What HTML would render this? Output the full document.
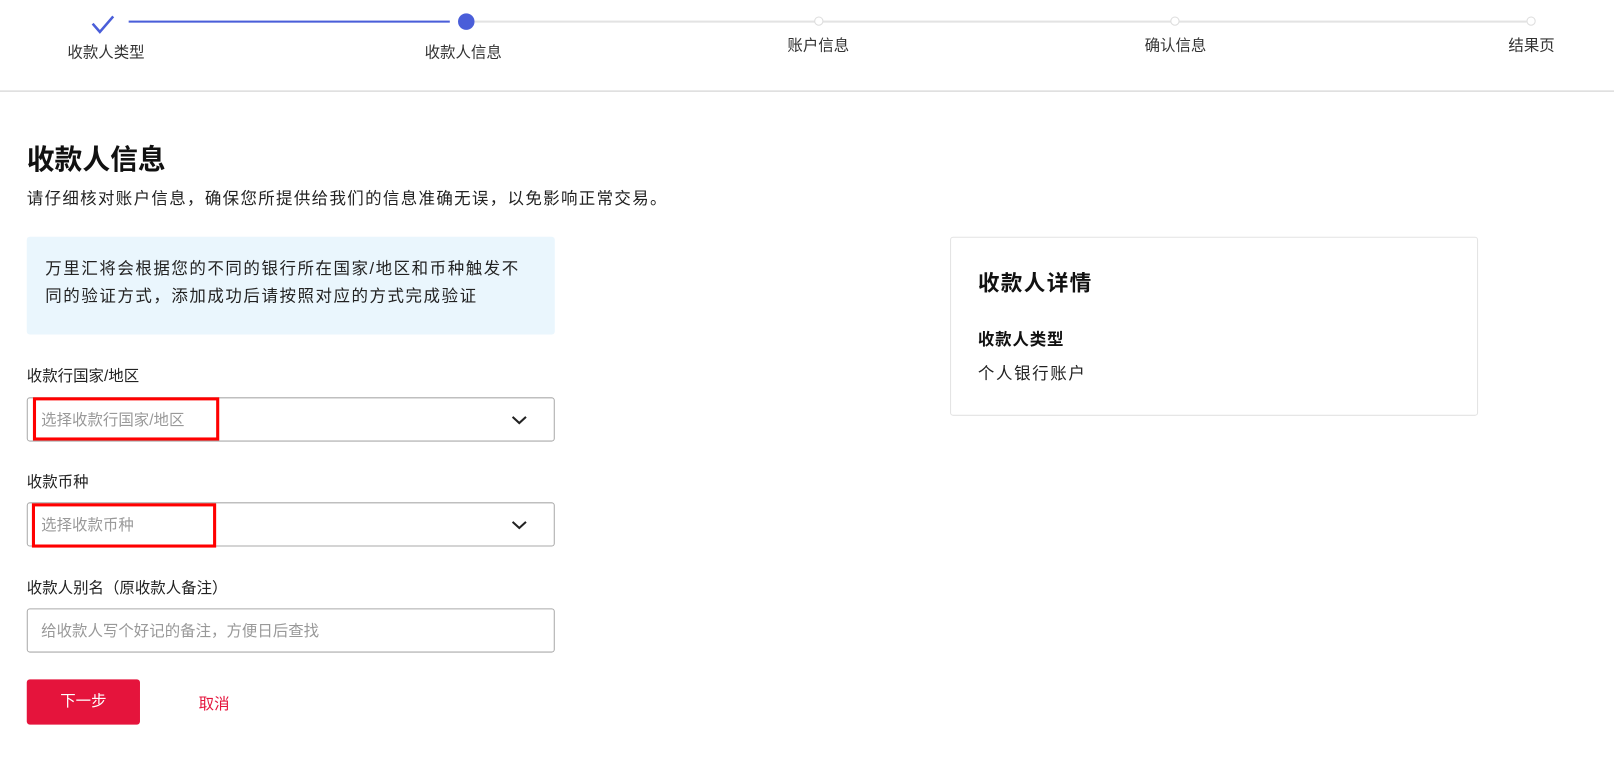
<!DOCTYPE html><html><head><meta charset="utf-8"><style>
body{margin:0;width:1614px;height:763px;background:#fff;font-family:"Liberation Sans","Noto Sans CJK SC",sans-serif;color:#222;position:relative;overflow:hidden}
#w{position:absolute;left:0;top:0;width:1568px;height:741px;transform:scale(1.0293);transform-origin:0 0}
.a{position:absolute;white-space:nowrap}
.lbl{font-size:15px;color:#333;transform:translateX(-50%)}
.dot{position:absolute;width:7px;height:7px;border:1.5px solid #ddd;border-radius:50%;background:#fff}
.sel{position:absolute;left:26px;width:511px;height:41px;border:1px solid #aaa;border-radius:3px}
.ph{position:absolute;left:13px;top:10px;font-size:15px;color:#999}
.rb{position:absolute;border:3px solid #f00}
</style></head><body><div id="w">
<div class="a" style="left:125px;top:20px;width:312px;height:2px;background:#4a5ed9"></div>
<div class="a" style="left:461px;top:20px;width:1022px;height:2px;background:#e3e3e3"></div>
<svg class="a" style="left:88px;top:14px" width="26" height="20"><path d="M2 9 L9 17 L22 2" fill="none" stroke="#4a5ed9" stroke-width="2.5"/></svg>
<div class="a" style="left:445px;top:13px;width:16px;height:16px;border-radius:50%;background:#4a5ed9"></div>
<div class="dot" style="left:791px;top:16px"></div>
<div class="dot" style="left:1137px;top:16px"></div>
<div class="dot" style="left:1483px;top:16px"></div>
<div class="a lbl" style="left:103px;top:40px">收款人类型</div>
<div class="a lbl" style="left:450px;top:40px">收款人信息</div>
<div class="a lbl" style="left:795px;top:33px">账户信息</div>
<div class="a lbl" style="left:1142px;top:33px">确认信息</div>
<div class="a lbl" style="left:1488px;top:33px">结果页</div>
<div class="a" style="left:0;top:88px;width:1614px;height:1px;background:#ccc"></div>
<div class="a" style="left:26px;top:133px;font-size:27px;font-weight:bold;color:#111">收款人信息</div>
<div class="a" style="left:26px;top:179px;font-size:16px;letter-spacing:1.3px;color:#222">请仔细核对账户信息，确保您所提供给我们的信息准确无误，以免影响正常交易。</div>
<div class="a" style="left:26px;top:230px;width:513px;height:95px;background:#eaf6fd;border-radius:3px"></div>
<div class="a" style="left:44px;top:248px;font-size:16px;letter-spacing:1.5px;line-height:27px;color:#222">万里汇将会根据您的不同的银行所在国家/地区和币种触发不<br>同的验证方式，添加成功后请按照对应的方式完成验证</div>
<div class="a" style="left:26px;top:354px;font-size:15px">收款行国家/地区</div>
<div class="sel" style="top:386px"><div class="ph">选择收款行国家/地区</div><svg class="a" style="left:470px;top:16px" width="15" height="10"><path d="M1 2 L7.5 8 L14 2" fill="none" stroke="#222" stroke-width="2"/></svg></div>
<div class="rb" style="left:32px;top:386px;width:175px;height:36px"></div>
<div class="a" style="left:26px;top:457px;font-size:15px">收款币种</div>
<div class="sel" style="top:488px"><div class="ph">选择收款币种</div><svg class="a" style="left:470px;top:16px" width="15" height="10"><path d="M1 2 L7.5 8 L14 2" fill="none" stroke="#222" stroke-width="2"/></svg></div>
<div class="rb" style="left:31px;top:489px;width:173px;height:37px"></div>
<div class="a" style="left:26px;top:560px;font-size:15px">收款人别名（原收款人备注）</div>
<div class="sel" style="top:591px"><div class="ph">给收款人写个好记的备注，方便日后查找</div></div>
<div class="a" style="left:26px;top:660px;width:110px;height:44px;background:#e5143c;border-radius:3px;color:#fff;font-size:15px;text-align:center;line-height:44px">下一步</div>
<div class="a" style="left:193px;top:673px;font-size:15px;color:#e5143c">取消</div>
<div class="a" style="left:923px;top:230px;width:511px;height:172px;border:1px solid #e3e3e3;border-radius:3px"></div>
<div class="a" style="left:950px;top:259px;font-size:21px;letter-spacing:1.3px;font-weight:bold;color:#111">收款人详情</div>
<div class="a" style="left:950px;top:316px;font-size:16px;letter-spacing:0.8px;font-weight:bold;color:#111">收款人类型</div>
<div class="a" style="left:950px;top:349px;font-size:16px;letter-spacing:1.6px;color:#222">个人银行账户</div>
</div></body></html>
